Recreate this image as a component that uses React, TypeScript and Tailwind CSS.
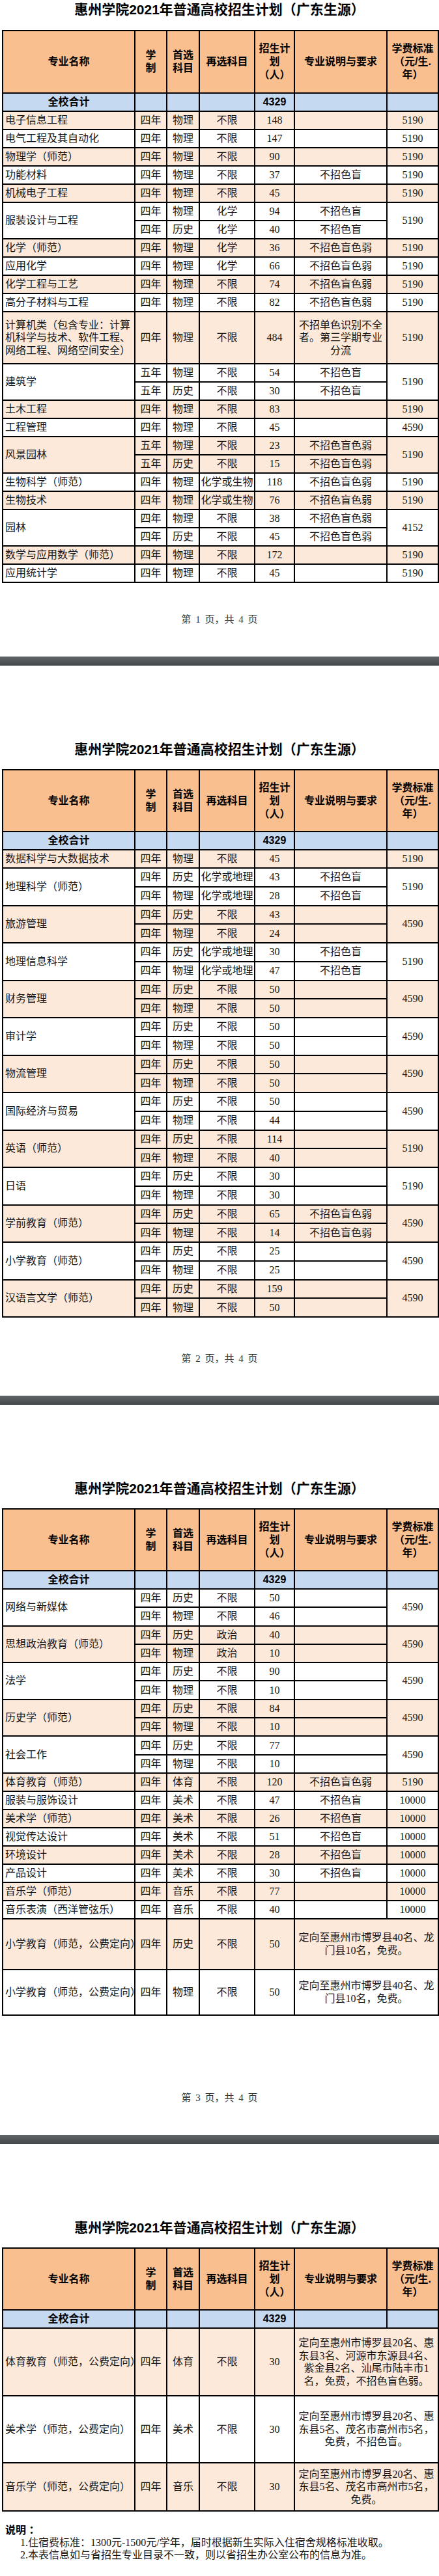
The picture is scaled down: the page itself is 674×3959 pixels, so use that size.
import React from 'react';

type Sub = { len: string; first: string; second: string; plan: string; desc: string };
type Row = {
  name: string[];
  subs: Sub[];
  fee?: string;
  merged?: string[];
  descLines?: string[];
  peach?: boolean;
  h: string;
};

const s = (len: string, first: string, second: string, plan: string, desc = ''): Sub => ({
  len,
  first,
  second,
  plan,
  desc,
});

const TITLE = '惠州学院2021年普通高校招生计划（广东生源）';

const page1: Row[] = [
  { name: ['电子信息工程'], subs: [s('四年', '物理', '不限', '148')], fee: '5190', peach: true, h: 'h-[28px]' },
  { name: ['电气工程及其自动化'], subs: [s('四年', '物理', '不限', '147')], fee: '5190', h: 'h-[28px]' },
  { name: ['物理学（师范）'], subs: [s('四年', '物理', '不限', '90')], fee: '5190', peach: true, h: 'h-[28px]' },
  { name: ['功能材料'], subs: [s('四年', '物理', '不限', '37', '不招色盲')], fee: '5190', h: 'h-[28px]' },
  { name: ['机械电子工程'], subs: [s('四年', '物理', '不限', '45')], fee: '5190', peach: true, h: 'h-[28px]' },
  {
    name: ['服装设计与工程'],
    subs: [s('四年', '物理', '化学', '94', '不招色盲'), s('四年', '历史', '化学', '40', '不招色盲')],
    fee: '5190',
    h: 'h-[28px]',
  },
  { name: ['化学（师范）'], subs: [s('四年', '物理', '化学', '36', '不招色盲色弱')], fee: '5190', peach: true, h: 'h-[28px]' },
  { name: ['应用化学'], subs: [s('四年', '物理', '化学', '66', '不招色盲色弱')], fee: '5190', h: 'h-[28px]' },
  { name: ['化学工程与工艺'], subs: [s('四年', '物理', '不限', '74', '不招色盲色弱')], fee: '5190', peach: true, h: 'h-[28px]' },
  { name: ['高分子材料与工程'], subs: [s('四年', '物理', '不限', '82', '不招色盲色弱')], fee: '5190', h: 'h-[28px]' },
  {
    name: ['计算机类（包含专业：计算', '机科学与技术、软件工程、', '网络工程、网络空间安全）'],
    subs: [s('四年', '物理', '不限', '484')],
    descLines: ['不招单色识别不全', '者。第三学期专业', '分流'],
    fee: '5190',
    peach: true,
    h: 'h-[80px]',
  },
  {
    name: ['建筑学'],
    subs: [s('五年', '物理', '不限', '54', '不招色盲'), s('五年', '历史', '不限', '30', '不招色盲')],
    fee: '5190',
    h: 'h-[28px]',
  },
  { name: ['土木工程'], subs: [s('四年', '物理', '不限', '83')], fee: '5190', peach: true, h: 'h-[28px]' },
  { name: ['工程管理'], subs: [s('四年', '物理', '不限', '45')], fee: '4590', h: 'h-[28px]' },
  {
    name: ['风景园林'],
    subs: [s('五年', '物理', '不限', '23', '不招色盲色弱'), s('五年', '历史', '不限', '15', '不招色盲色弱')],
    fee: '5190',
    peach: true,
    h: 'h-[28px]',
  },
  { name: ['生物科学（师范）'], subs: [s('四年', '物理', '化学或生物', '118', '不招色盲色弱')], fee: '5190', h: 'h-[28px]' },
  { name: ['生物技术'], subs: [s('四年', '物理', '化学或生物', '76', '不招色盲色弱')], fee: '5190', peach: true, h: 'h-[28px]' },
  {
    name: ['园林'],
    subs: [s('四年', '物理', '不限', '38', '不招色盲色弱'), s('四年', '历史', '不限', '45', '不招色盲色弱')],
    fee: '4152',
    h: 'h-[28px]',
  },
  { name: ['数学与应用数学（师范）'], subs: [s('四年', '物理', '不限', '172')], fee: '5190', peach: true, h: 'h-[28px]' },
  { name: ['应用统计学'], subs: [s('四年', '物理', '不限', '45')], fee: '5190', h: 'h-[28px]' },
];

const pair = (second: string, a: string, b: string, desc = '', second2 = second): Sub[] => [
  s('四年', '历史', second, a, desc),
  s('四年', '物理', second2, b, desc),
];

const page2: Row[] = [
  { name: ['数据科学与大数据技术'], subs: [s('四年', '物理', '不限', '45')], fee: '5190', peach: true, h: 'h-[28px]' },
  { name: ['地理科学（师范）'], subs: pair('化学或地理', '43', '28', '不招色盲'), fee: '5190', h: 'h-[28.75px]' },
  { name: ['旅游管理'], subs: pair('不限', '43', '24'), fee: '4590', peach: true, h: 'h-[28.75px]' },
  { name: ['地理信息科学'], subs: pair('化学或地理', '30', '47', '不招色盲'), fee: '5190', h: 'h-[28.75px]' },
  { name: ['财务管理'], subs: pair('不限', '50', '50'), fee: '4590', peach: true, h: 'h-[28.75px]' },
  { name: ['审计学'], subs: pair('不限', '50', '50'), fee: '4590', h: 'h-[28.75px]' },
  { name: ['物流管理'], subs: pair('不限', '50', '50'), fee: '4590', peach: true, h: 'h-[28.75px]' },
  { name: ['国际经济与贸易'], subs: pair('不限', '50', '44'), fee: '4590', h: 'h-[28.75px]' },
  { name: ['英语（师范）'], subs: pair('不限', '114', '40'), fee: '5190', peach: true, h: 'h-[28.75px]' },
  { name: ['日语'], subs: pair('不限', '30', '30'), fee: '5190', h: 'h-[28.75px]' },
  { name: ['学前教育（师范）'], subs: pair('不限', '65', '14', '不招色盲色弱'), fee: '4590', peach: true, h: 'h-[28.75px]' },
  { name: ['小学教育（师范）'], subs: pair('不限', '25', '25'), fee: '4590', h: 'h-[28.75px]' },
  { name: ['汉语言文学（师范）'], subs: pair('不限', '159', '50'), fee: '4590', peach: true, h: 'h-[28.75px]' },
];

const page3: Row[] = [
  { name: ['网络与新媒体'], subs: pair('不限', '50', '46'), fee: '4590', h: 'h-[28.3px]' },
  { name: ['思想政治教育（师范）'], subs: pair('政治', '40', '10'), fee: '4590', peach: true, h: 'h-[28.3px]' },
  { name: ['法学'], subs: pair('不限', '90', '10'), fee: '4590', h: 'h-[28.3px]' },
  { name: ['历史学（师范）'], subs: pair('不限', '84', '10'), fee: '4590', peach: true, h: 'h-[28.3px]' },
  { name: ['社会工作'], subs: pair('不限', '77', '10'), fee: '4590', h: 'h-[28.3px]' },
  { name: ['体育教育（师范）'], subs: [s('四年', '体育', '不限', '120', '不招色盲色弱')], fee: '5190', peach: true, h: 'h-[28px]' },
  { name: ['服装与服饰设计'], subs: [s('四年', '美术', '不限', '47', '不招色盲')], fee: '10000', h: 'h-[28px]' },
  { name: ['美术学（师范）'], subs: [s('四年', '美术', '不限', '26', '不招色盲')], fee: '10000', peach: true, h: 'h-[28px]' },
  { name: ['视觉传达设计'], subs: [s('四年', '美术', '不限', '51', '不招色盲')], fee: '10000', h: 'h-[28px]' },
  { name: ['环境设计'], subs: [s('四年', '美术', '不限', '28', '不招色盲')], fee: '10000', peach: true, h: 'h-[28px]' },
  { name: ['产品设计'], subs: [s('四年', '美术', '不限', '30', '不招色盲')], fee: '10000', h: 'h-[28px]' },
  { name: ['音乐学（师范）'], subs: [s('四年', '音乐', '不限', '77')], fee: '10000', peach: true, h: 'h-[28px]' },
  { name: ['音乐表演（西洋管弦乐）'], subs: [s('四年', '音乐', '不限', '40')], fee: '10000', h: 'h-[28px]' },
  {
    name: ['小学教育（师范，公费定向）'],
    subs: [s('四年', '历史', '不限', '50')],
    merged: ['定向至惠州市博罗县40名、龙', '门县10名，免费。'],
    peach: true,
    h: 'h-[78px]',
  },
  {
    name: ['小学教育（师范，公费定向）'],
    subs: [s('四年', '物理', '不限', '50')],
    merged: ['定向至惠州市博罗县40名、龙', '门县10名，免费。'],
    h: 'h-[70px]',
  },
];

const page4: Row[] = [
  {
    name: ['体育教育（师范，公费定向）'],
    subs: [s('四年', '体育', '不限', '30')],
    merged: ['定向至惠州市博罗县20名、惠', '东县3名、河源市东源县4名、', '紫金县2名、汕尾市陆丰市1', '名，免费，不招色盲色弱。'],
    peach: true,
    h: 'h-[104px]',
  },
  {
    name: ['美术学（师范，公费定向）'],
    subs: [s('四年', '美术', '不限', '30')],
    merged: ['定向至惠州市博罗县20名、惠', '东县5名、茂名市高州市5名，', '免费，不招色盲。'],
    h: 'h-[103px]',
  },
  {
    name: ['音乐学（师范，公费定向）'],
    subs: [s('四年', '音乐', '不限', '30')],
    merged: ['定向至惠州市博罗县20名、惠', '东县5名、茂名市高州市5名，', '免费。'],
    peach: true,
    h: 'h-[74px]',
  },
];

const cell = 'border-2 border-black p-0 text-center align-middle';

const Lines = ({ lines }: { lines: string[] }) => (
  <>
    {lines.map((l, i) => (
      <div key={i} className="leading-[19.5px]">
        {l}
      </div>
    ))}
  </>
);

const HeaderRows = ({ headH }: { headH: string }) => (
  <thead className="font-['Liberation_Sans','Noto_Sans_CJK_SC',sans-serif] font-bold text-black">
    <tr className={`${headH} bg-[#F9BF8F] text-[16px] leading-[20px]`}>
      <th className={cell}>专业名称</th>
      <th className={cell}>
        <div>学</div>
        <div>制</div>
      </th>
      <th className={cell}>
        <div>首选</div>
        <div>科目</div>
      </th>
      <th className={cell}>再选科目</th>
      <th className={cell}>
        <div>招生计</div>
        <div>划</div>
        <div>（人）</div>
      </th>
      <th className={cell}>专业说明与要求</th>
      <th className={cell}>
        <div>学费标准</div>
        <div>（元/生.</div>
        <div>年）</div>
      </th>
    </tr>
    <tr className="h-[28px] bg-[#C5D9F1] text-[16px] leading-[20px]">
      <td className={cell}>全校合计</td>
      <td className={cell}></td>
      <td className={cell}></td>
      <td className={cell}></td>
      <td className={cell}>4329</td>
      <td className={cell}></td>
      <td className={cell}></td>
    </tr>
  </thead>
);

const DataRows = ({ rows }: { rows: Row[] }) => (
  <tbody className="text-[16px] leading-[20px] text-[#161616]">
    {rows.flatMap((r, ri) =>
      r.subs.map((sub, i) => (
        <tr key={`${ri}-${i}`} className={`${r.h} ${r.peach ? 'bg-[#FDE9D9]' : 'bg-white'}`}>
          {i === 0 && (
            <td
              rowSpan={r.subs.length}
              className="border-2 border-black py-0 pl-[3px] pr-0 text-left align-middle whitespace-nowrap overflow-hidden"
            >
              {r.name.length > 1 ? <Lines lines={r.name} /> : r.name[0]}
            </td>
          )}
          <td className={cell}>{sub.len}</td>
          <td className={cell}>{sub.first}</td>
          <td className={`${cell} whitespace-nowrap`}>{sub.second}</td>
          <td className={cell}>{sub.plan}</td>
          {r.merged ? (
            i === 0 && (
              <td colSpan={2} rowSpan={r.subs.length} className={cell}>
                <Lines lines={r.merged} />
              </td>
            )
          ) : (
            <>
              <td className={cell}>{r.descLines ? <Lines lines={r.descLines} /> : sub.desc}</td>
              {i === 0 && (
                <td rowSpan={r.subs.length} className={cell}>
                  {r.fee}
                </td>
              )}
            </>
          )}
        </tr>
      ))
    )}
  </tbody>
);

const PlanTable = ({ rows, headH, mt }: { rows: Row[]; headH: string; mt: string }) => (
  <table className={`${mt} ml-[3px] w-[669px] table-fixed border-collapse`}>
    <colgroup>
      <col className="w-[203px]" />
      <col className="w-[49px]" />
      <col className="w-[50px]" />
      <col className="w-[85px]" />
      <col className="w-[61px]" />
      <col className="w-[142px]" />
      <col className="w-[79px]" />
    </colgroup>
    <HeaderRows headH={headH} />
    <DataRows rows={rows} />
  </table>
);

const Title = () => (
  <h1 className="text-center text-[21px] leading-[30px] font-bold text-black font-['Liberation_Sans','Noto_Sans_CJK_SC',sans-serif]">
    {TITLE}
  </h1>
);

const Footer = ({ n }: { n: number }) => (
  <p className="mt-auto pb-[47px] text-center text-[15px] leading-[20px] text-[#333] [word-spacing:3px]">
    第 {n} 页，共 4 页
  </p>
);

const Separator = () => <div className="h-[14px] w-full bg-gradient-to-b from-[#62656a] to-[#43464a]" />;

export default function App() {
  return (
    <div className="w-[674px] bg-white font-['Liberation_Serif','Noto_Sans_CJK_SC',serif]">
      <section className="flex h-[1009px] flex-col">
        <Title />
        <PlanTable rows={page1} headH="h-[96px]" mt="mt-[16px]" />
        <Footer n={1} />
      </section>
      <Separator />
      <section className="flex h-[1122px] flex-col pt-[114px]">
        <Title />
        <PlanTable rows={page2} headH="h-[95px]" mt="mt-[15px]" />
        <Footer n={2} />
      </section>
      <Separator />
      <section className="flex h-[1122px] flex-col pt-[114px]">
        <Title />
        <PlanTable rows={page3} headH="h-[95px]" mt="mt-[15px]" />
        <Footer n={3} />
      </section>
      <Separator />
      <section className="flex h-[664px] flex-col pt-[114px]">
        <Title />
        <PlanTable rows={page4} headH="h-[95px]" mt="mt-[15px]" />
        <div className="mt-[19px] text-[16px] leading-[19px] text-[#161616]">
          <div className="pl-[8px] font-bold font-['Liberation_Sans','Noto_Sans_CJK_SC',sans-serif] text-black">说明 ：</div>
          <div className="pl-[31px]">1.住宿费标准：1300元-1500元/学年，届时根据新生实际入住宿舍规格标准收取。</div>
          <div className="pl-[31px]">2.本表信息如与省招生专业目录不一致，则以省招生办公室公布的信息为准。</div>
        </div>
      </section>
    </div>
  );
}
